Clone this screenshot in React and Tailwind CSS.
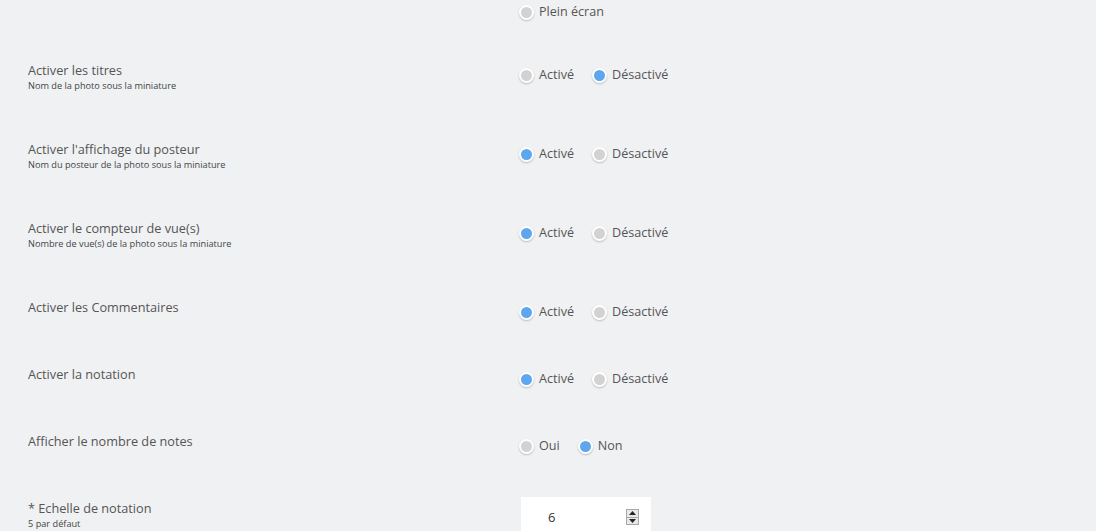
import React from "react";

function Radio({ checked, label }) {
  return (
    <label className="flex items-center h-[18px] mr-[18px]">
      <span
        className={
          "w-[15px] h-[15px] rounded-full border-2 border-white shadow-[0_1px_2px_rgba(0,0,0,0.22)] " +
          (checked ? "bg-[#5ea6ee]" : "bg-[#d2d2d2]")
        }
      />
      <span className="ml-[5px] text-[12.6px] text-[#555]">{label}</span>
    </label>
  );
}

function Row({ title, sub, h, children }) {
  return (
    <div className={"flex items-start " + h}>
      <div className="w-[491px] shrink-0">
        <div className="text-[12.7px] leading-[16px] text-[#555]">{title}</div>
        {sub && <div className="text-[9.2px] leading-[15px] text-[#444]">{sub}</div>}
      </div>
      <div className="flex mt-[4px]">{children}</div>
    </div>
  );
}

export default function App() {
  return (
    <div
      className="w-[1096px] h-[531px] overflow-hidden bg-[#f0f1f3] pl-[28px] pt-[3px]"
      style={{ fontFamily: "'Open Sans', 'Noto Sans', sans-serif" }}
    >
      <div className="flex items-start h-[59px]">
        <div className="w-[491px] shrink-0" />
        <div className="flex">
          <Radio label="Plein écran" />
        </div>
      </div>
      <Row title="Activer les titres" sub="Nom de la photo sous la miniature" h="h-[79px]">
        <Radio label="Activé" />
        <Radio checked label="Désactivé" />
      </Row>
      <Row title="Activer l'affichage du posteur" sub="Nom du posteur de la photo sous la miniature" h="h-[79px]">
        <Radio checked label="Activé" />
        <Radio label="Désactivé" />
      </Row>
      <Row title="Activer le compteur de vue(s)" sub="Nombre de vue(s) de la photo sous la miniature" h="h-[79px]">
        <Radio checked label="Activé" />
        <Radio label="Désactivé" />
      </Row>
      <Row title="Activer les Commentaires" h="h-[67px]">
        <Radio checked label="Activé" />
        <Radio label="Désactivé" />
      </Row>
      <Row title="Activer la notation" h="h-[67px]">
        <Radio checked label="Activé" />
        <Radio label="Désactivé" />
      </Row>
      <Row title="Afficher le nombre de notes" h="h-[64px]">
        <Radio label="Oui" />
        <Radio checked label="Non" />
      </Row>
      <div className="flex items-start">
        <div className="w-[493px] shrink-0 pt-[3px]">
          <div className="text-[12.7px] leading-[16px] text-[#555]">* Echelle de notation</div>
          <div className="text-[9.2px] leading-[15px] text-[#444]">5 par défaut</div>
        </div>
        <div className="w-[130px] h-[40px] bg-white flex items-start pt-[12px]">
          <span className="ml-[27px] text-[13px] leading-[16px] text-[#333] w-[78px]">6</span>
          <span className="w-[13px] h-[16px] border border-[#a8a8a8] bg-[#e8e8e8] flex flex-col">
            <span className="flex-1 flex items-center justify-center border-b border-[#a8a8a8]">
              <svg width="7" height="4" viewBox="0 0 7 4"><path d="M3.5 0L7 4H0z" fill="#222" /></svg>
            </span>
            <span className="flex-1 flex items-center justify-center">
              <svg width="7" height="4" viewBox="0 0 7 4"><path d="M0 0h7L3.5 4z" fill="#222" /></svg>
            </span>
          </span>
        </div>
      </div>
    </div>
  );
}
